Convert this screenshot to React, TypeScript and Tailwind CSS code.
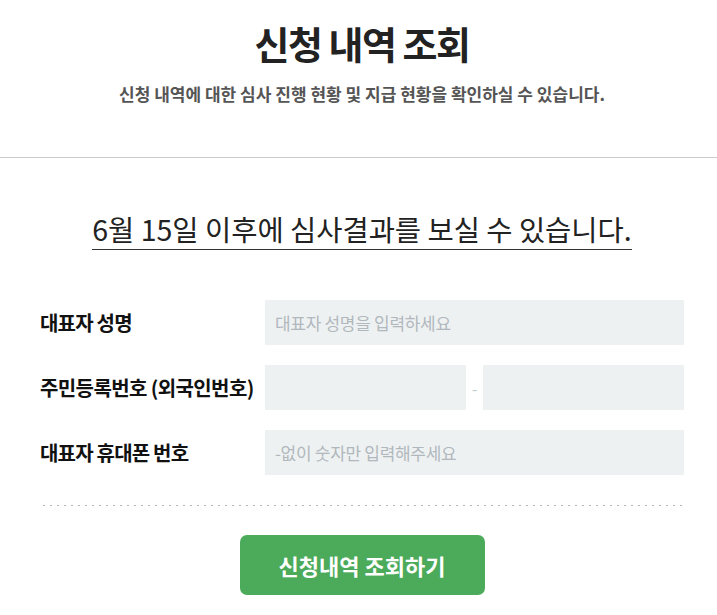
import React from "react";

const font = "font-['Noto_Sans_CJK_KR','Noto_Sans',sans-serif]";

function Field({ placeholder }: { placeholder?: string }) {
  return (
    <input
      type="text"
      placeholder={placeholder}
      className="h-[45px] w-full bg-[#eef1f2] px-[10px] text-[17px] tracking-[-0.3px] text-[#333] outline-none placeholder:text-[#b1b8bd]"
    />
  );
}

export default function App() {
  return (
    <div className={`${font} min-h-[615px] w-full bg-white text-[#222]`}>
      {/* Header */}
      <header className="border-b border-[#cccccc] pb-[53px] pt-[14px]">
        <div className="ml-[40px] w-[644px] text-center">
          <h1 className="text-[38px] font-bold leading-[58px] tracking-[-1.5px] text-[#222]">신청 내역 조회</h1>
          <p className="mt-[11px] text-[17px] font-bold leading-[21px] text-[#555]">
            신청 내역에 대한 심사 진행 현황 및 지급 현황을 확인하실 수 있습니다.
          </p>
        </div>
      </header>

      <main className="ml-[40px] w-[644px]">
        <div className="pt-[50px] text-center">
          <span className="inline-block border-b border-[#333] text-[28.5px] leading-[41px] text-[#222]">
            6월 15일 이후에 심사결과를 보실 수 있습니다.
          </span>
        </div>

        <div className="mt-[50px] flex flex-col gap-[20px]">
          <div className="flex items-center">
            <label className="w-[225px] text-[20px] font-bold tracking-[-0.8px] text-[#111]">대표자 성명</label>
            <div className="flex-1">
              <Field placeholder="대표자 성명을 입력하세요" />
            </div>
          </div>
          <div className="flex items-center">
            <label className="w-[225px] whitespace-nowrap text-[20px] font-bold tracking-[-0.6px] text-[#111]">
              주민등록번호 (외국인번호)
            </label>
            <div className="flex flex-1 items-center">
              <div className="w-[201px]">
                <Field />
              </div>
              <span className="w-[17px] text-center text-[16px] text-[#c5ccd0]">-</span>
              <div className="flex-1">
                <Field />
              </div>
            </div>
          </div>
          <div className="flex items-center">
            <label className="w-[225px] text-[20px] font-bold tracking-[-0.8px] text-[#111]">대표자 휴대폰 번호</label>
            <div className="flex-1">
              <Field placeholder="-없이 숫자만 입력해주세요" />
            </div>
          </div>
        </div>

        <div className="mt-[30px] ml-[3px] h-px bg-[linear-gradient(to_right,#b5b5b5_2px,transparent_2px)] bg-[length:7px_1px] bg-repeat-x" />

        <div className="mt-[29px] flex justify-center">
          <button className="h-[60px] w-[245px] rounded-[7px] bg-[#4caa5b] text-[22px] font-bold text-white">
            신청내역 조회하기
          </button>
        </div>
      </main>
    </div>
  );
}
